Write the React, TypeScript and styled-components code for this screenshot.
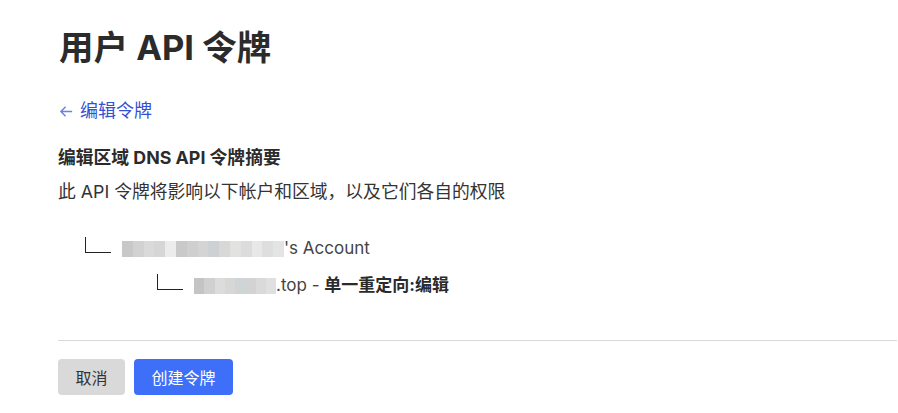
import React from "react";
import styled, { createGlobalStyle } from "styled-components";

const Global = createGlobalStyle`
  html, body { margin: 0; padding: 0; background: #fff; }
  body {
    font-family: Inter, "Noto Sans CJK SC", sans-serif;
    color: #333;
  }
`;

const Page = styled.div`
  padding: 24px 1px 0 58px;
  display: flex;
  flex-direction: column;
`;

const Title = styled.h1`
  margin: 0;
  font-size: 34.5px;
  line-height: 48px;
  font-weight: 700;
  color: #2b2b2b;
  padding-left: 1px;
`;

const BackLink = styled.a`
  margin-top: 27px;
  display: flex;
  align-items: center;
  gap: 6px;
  font-size: 18px;
  line-height: 24px;
  color: #3450d4;
  text-decoration: none;
  padding-left: 1px;
`;

const Arrow = styled.svg`
  width: 15px;
  height: 15px;
`;

const Heading = styled.h2`
  margin: 23px 0 0;
  font-size: 17.8px;
  line-height: 24px;
  font-weight: 700;
  color: #2b2b2b;
`;

const Desc = styled.p`
  margin: 10px 0 0;
  font-size: 17.8px;
  line-height: 24px;
  color: #333;
`;

const Tree = styled.div`
  margin-top: 32px;
  display: flex;
  flex-direction: column;
  gap: 13px;
`;

const Row = styled.div<{ $level: number }>`
  display: flex;
  align-items: flex-end;
  padding-left: ${(p) => 27 + p.$level * 72}px;
  font-size: 17px;
  line-height: 24px;
  color: #444;
`;

const Corner = styled.span`
  width: 25px;
  height: 15px;
  border-left: 1px solid #222;
  border-bottom: 1px solid #222;
  margin-right: 11px;
  margin-bottom: 7px;
  flex: none;
`;

const Mosaic = styled.span<{ $w: number }>`
  display: inline-flex;
  width: ${(p) => p.$w}px;
  height: 16px;
  margin-bottom: 3px;
  overflow: hidden;
`;

const Cell = styled.span<{ $c: string }>`
  flex: 1;
  background: ${(p) => p.$c};
`;

const Strong = styled.strong`
  font-weight: 700;
  color: #2b2b2b;
`;

const Divider = styled.hr`
  margin: 43px 0 0;
  border: none;
  border-top: 1px solid #d9d9d9;
`;

const Actions = styled.div`
  margin-top: 18px;
  display: flex;
  gap: 9px;
`;

const Button = styled.button<{ $primary?: boolean }>`
  height: 36px;
  padding: 0 17.5px;
  border: none;
  border-radius: 4px;
  font-family: Inter, "Noto Sans CJK SC", sans-serif;
  font-size: 16px;
  background: ${(p) => (p.$primary ? "#3e6ff8" : "#d9d9d9")};
  color: ${(p) => (p.$primary ? "#fff" : "#333")};
`;

const tones1 = ["#c8c8c8", "#d2d2d2", "#dadada", "#d6d6d6", "#ececec", "#c9c9c9", "#cfcfcf", "#d4d4d4", "#cdd1d4", "#d8d8d8", "#e2e3e1", "#dcdcdc", "#e8e8e8", "#dedede", "#e4e4e4"];
const tones2 = ["#c4c4c4", "#d0d0d0", "#dcdcdc", "#d7d7d7", "#cfd4d6", "#d3d3d3", "#dadada", "#e0e0e0"];

export default function App() {
  return (
    <>
      <Global />
      <Page>
        <Title>用户 API 令牌</Title>
        <BackLink href="#">
          <Arrow viewBox="0 0 16 16" fill="none" stroke="#6a7fe0" strokeWidth="1.5">
            <path d="M14 8H2M7 3L2 8l5 5" />
          </Arrow>
          编辑令牌
        </BackLink>
        <Heading>编辑区域 DNS API 令牌摘要</Heading>
        <Desc>此 API 令牌将影响以下帐户和区域，以及它们各自的权限</Desc>
        <Tree>
          <Row $level={0}>
            <Corner />
            <Mosaic $w={162}>
              {tones1.map((c, i) => (
                <Cell key={i} $c={c} />
              ))}
            </Mosaic>
            <span>'s Account</span>
          </Row>
          <Row $level={1}>
            <Corner />
            <Mosaic $w={82}>
              {tones2.map((c, i) => (
                <Cell key={i} $c={c} />
              ))}
            </Mosaic>
            <span>
              .top - <Strong>单一重定向:编辑</Strong>
            </span>
          </Row>
        </Tree>
        <Divider />
        <Actions>
          <Button>取消</Button>
          <Button $primary>创建令牌</Button>
        </Actions>
      </Page>
    </>
  );
}
